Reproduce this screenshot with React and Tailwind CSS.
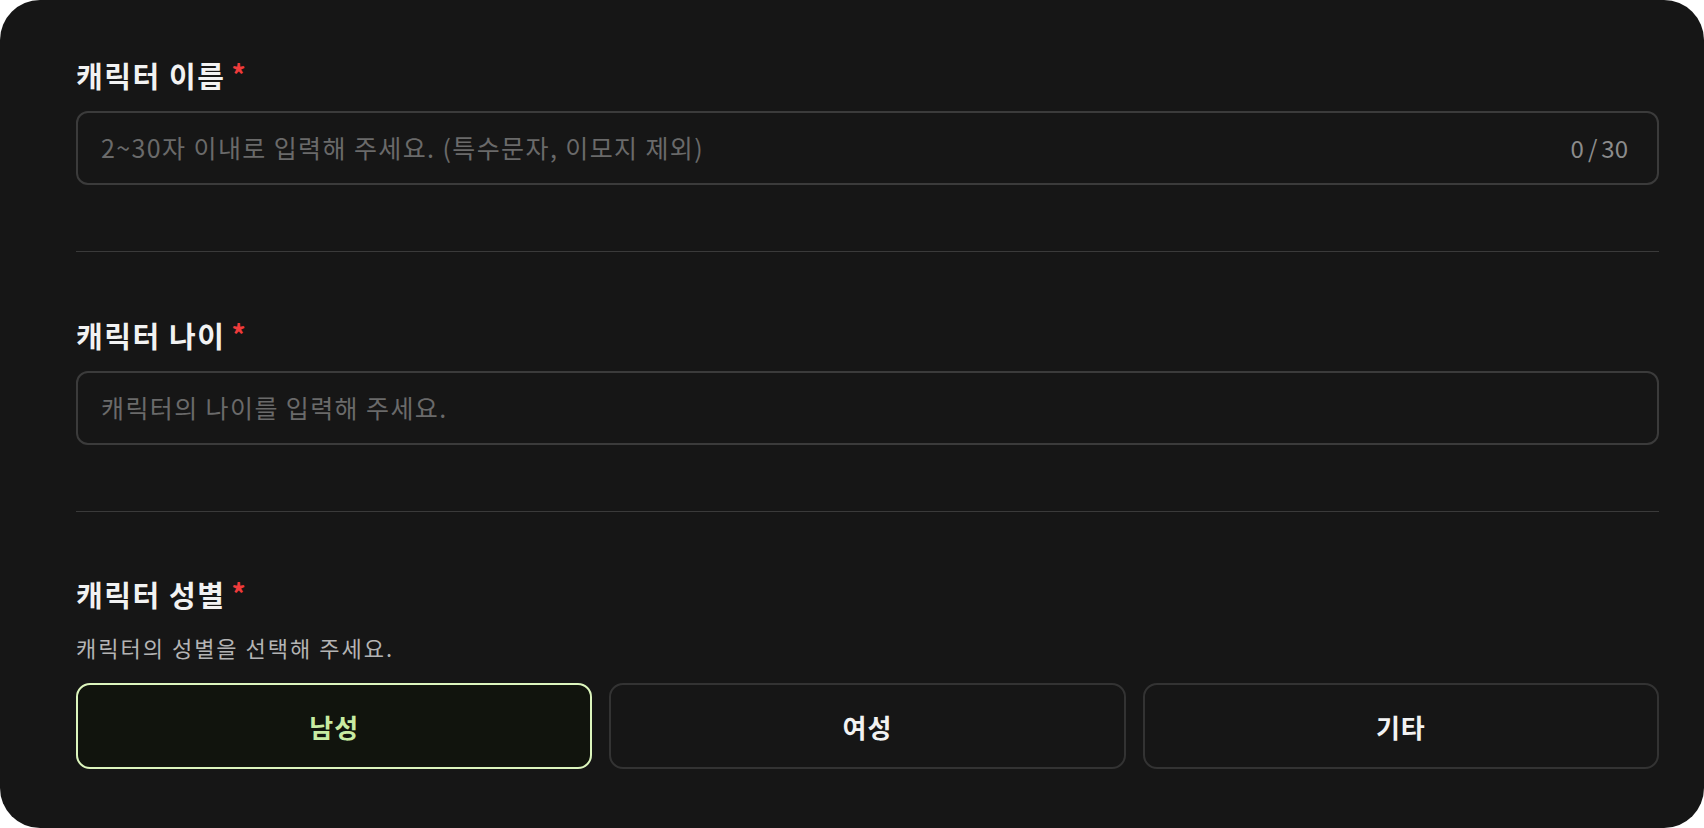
import { useState } from 'react';

const font = { fontFamily: '"Noto Sans CJK KR", "Noto Sans", sans-serif' };

function Label({ children }) {
  return (
    <div className="flex items-center text-[29px] leading-[39px] font-bold tracking-[1.6px] text-[#f2f2f2]">
      <span>{children}</span>
      <span className="ml-[6px] mt-[-4px] text-[28px] leading-[28px] text-[#ef3b3b]">*</span>
    </div>
  );
}

export default function App() {
  const [name, setName] = useState('');
  const [age, setAge] = useState('');
  const [gender, setGender] = useState('남성');

  return (
    <div className="w-[1704px] h-[828px] bg-white" style={font}>
      <div className="h-full bg-[#161616] rounded-[40px] pl-[76px] pr-[45px]">
        <div className="pt-[56px] pb-[66px] border-b border-[#3a3a3a]">
          <Label>캐릭터 이름</Label>
          <div className="mt-[16px] h-[74px] flex items-center rounded-[12px] border-2 border-[#3b3b3b] pl-[23px] pr-[29px]">
            <input
              value={name}
              onChange={e => setName(e.target.value.slice(0, 30))}
              placeholder="2~30자 이내로 입력해 주세요. (특수문자, 이모지 제외)"
              className="flex-1 bg-transparent outline-none text-[25px] tracking-[1.4px] text-white placeholder:text-[#6a6a6a]"
            />
            <span className="flex gap-[4px] text-[24px] text-[#8c8c8c]">
              <span>{name.length}</span><span>/</span><span>30</span>
            </span>
          </div>
        </div>

        <div className="pt-[64px] pb-[66px] border-b border-[#3a3a3a]">
          <Label>캐릭터 나이</Label>
          <div className="mt-[16px] h-[74px] flex items-center rounded-[12px] border-2 border-[#3b3b3b] pl-[23px] pr-[29px]">
            <input
              value={age}
              onChange={e => setAge(e.target.value)}
              placeholder="캐릭터의 나이를 입력해 주세요."
              className="flex-1 bg-transparent outline-none text-[25px] tracking-[1.4px] text-white placeholder:text-[#6a6a6a]"
            />
          </div>
        </div>

        <div className="pt-[63px]">
          <Label>캐릭터 성별</Label>
          <p className="mt-[18px] text-[22px] leading-[30px] tracking-[2px] text-[#b4b4b4]">캐릭터의 성별을 선택해 주세요.</p>
          <div className="mt-[21px] grid grid-cols-3 gap-[17px]">
            {['남성', '여성', '기타'].map(g => (
              <button
                key={g}
                onClick={() => setGender(g)}
                className={`h-[86px] rounded-[14px] border-2 text-[26px] font-bold tracking-[1px] ${gender === g ? 'border-[#dcf5bd] bg-[#11140d] text-[#c8eba2]' : 'border-[#333333] bg-transparent text-[#f2f2f2]'}`}
              >
                {g}
              </button>
            ))}
          </div>
        </div>
      </div>
    </div>
  );
}
